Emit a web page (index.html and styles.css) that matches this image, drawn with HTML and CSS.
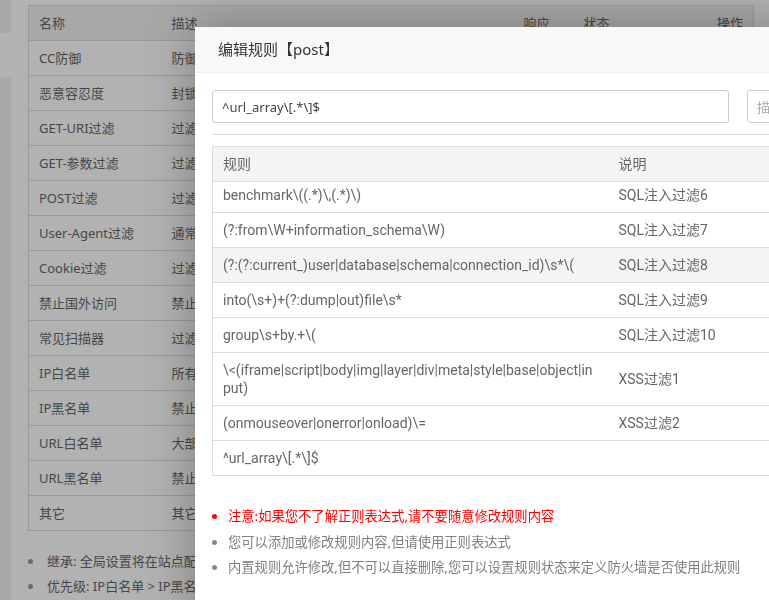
FILE: index.html
```html
<!DOCTYPE html>
<html lang="zh-CN">
<head>
  <meta charset="UTF-8" />
  <meta name="viewport" content="width=device-width, initial-scale=1.0" />
  <title>网站防火墙 - 编辑规则</title>
  <link rel="stylesheet" href="styles.css">
</head>
<body>
  <div class="page">
    <div class="side-nav">
      <div class="nav-item active"></div>
    </div>
    <div class="main">
      <table class="waf-table">
        <colgroup>
          <col class="c-name"><col class="c-desc"><col class="c-resp"><col class="c-state"><col class="c-op">
        </colgroup>
        <thead>
          <tr><th>名称</th><th>描述</th><th>响应</th><th>状态</th><th class="op">操作</th></tr>
        </thead>
        <tbody>
          <tr><td>CC防御</td><td>防御CC攻击，具体防御参数请到站点配置中调整</td><td></td><td></td><td></td></tr>
          <tr><td>恶意容忍度</td><td>封锁连续恶意请求，请到站点配置中调整容忍阈值</td><td></td><td></td><td></td></tr>
          <tr><td>GET-URI过滤</td><td>过滤URI中的恶意攻击</td><td></td><td></td><td></td></tr>
          <tr><td>GET-参数过滤</td><td>过滤GET参数中的恶意攻击</td><td></td><td></td><td></td></tr>
          <tr><td>POST过滤</td><td>过滤POST参数中的恶意攻击</td><td></td><td></td><td></td></tr>
          <tr><td>User-Agent过滤</td><td>通常用于过滤浏览器、蜘蛛及一些自动扫描器</td><td></td><td></td><td></td></tr>
          <tr><td>Cookie过滤</td><td>过滤利用Cookie发起的渗透攻击</td><td></td><td></td><td></td></tr>
          <tr><td>禁止国外访问</td><td>禁止中国大陆以外的地区访问站点</td><td></td><td></td><td></td></tr>
          <tr><td>常见扫描器</td><td>过滤常见扫描测试工具的渗透测试</td><td></td><td></td><td></td></tr>
          <tr><td>IP白名单</td><td>所有规则对IP白名单无效</td><td></td><td></td><td></td></tr>
          <tr><td>IP黑名单</td><td>禁止访问的IP</td><td></td><td></td><td></td></tr>
          <tr><td>URL白名单</td><td>大部分规则对URL白名单无效</td><td></td><td></td><td></td></tr>
          <tr><td>URL黑名单</td><td>禁止访问的URL地址</td><td></td><td></td><td></td></tr>
          <tr><td>其它</td><td>其它规则</td><td></td><td></td><td></td></tr>
        </tbody>
      </table>

      <ul class="tips">
        <li>继承: 全局设置将在站点配置中自动继承为默认值</li>
        <li>优先级: IP白名单 &gt; IP黑名单 &gt; URL白名单 &gt; URL黑名单 &gt; CC防御</li>
      </ul>
    </div>
  </div>

  <div class="shade"></div>

  <div class="layer">
    <div class="layer-title">编辑规则【post】</div>
    <div class="layer-content">
      <div class="rule-form">
        <input class="bt-input rule-input" type="text" value="^url_array\[.*\]$" />
        <input class="bt-input desc-input" type="text" placeholder="描述" />
      </div>
      <div class="divider"></div>

      <div class="rule-table">
        <table class="rules">
          <colgroup><col class="c-rule"><col class="c-note"></colgroup>
          <thead>
            <tr><th>规则</th><th>说明</th></tr>
          </thead>
        </table>
        <div class="rule-scroll">
          <table class="rules rules-body">
            <colgroup><col class="c-rule"><col class="c-note"></colgroup>
            <tbody>
              <tr><td>benchmark\((.*)\,(.*)\)</td><td>SQL注入过滤6</td></tr>
              <tr><td>(?:from\W+information_schema\W)</td><td>SQL注入过滤7</td></tr>
              <tr class="hover"><td>(?:(?:current_)user|database|schema|connection_id)\s*\(</td><td>SQL注入过滤8</td></tr>
              <tr><td>into(\s+)+(?:dump|out)file\s*</td><td>SQL注入过滤9</td></tr>
              <tr><td>group\s+by.+\(</td><td>SQL注入过滤10</td></tr>
              <tr><td>\&lt;(iframe|script|body|img|layer|div|meta|style|base|object|input)</td><td>XSS过滤1</td></tr>
              <tr><td>(onmouseover|onerror|onload)\=</td><td>XSS过滤2</td></tr>
              <tr><td>^url_array\[.*\]$</td><td></td></tr>
            </tbody>
          </table>
        </div>
      </div>

      <ul class="help">
        <li class="warn">注意:如果您不了解正则表达式,请不要随意修改规则内容</li>
        <li>您可以添加或修改规则内容,但请使用正则表达式</li>
        <li>内置规则允许修改,但不可以直接删除,您可以设置规则状态来定义防火墙是否使用此规则</li>
      </ul>
    </div>
  </div>
</body>
</html>
```

FILE: styles.css
```css
* {
  box-sizing: border-box;
}
html, body {
  margin: 0;
  height: 100%;
  overflow: hidden;
}
body {
  font-family: "Noto Sans", "Noto Sans CJK SC", sans-serif;
  font-size: 13px;
  color: #666;
  background: #fff;
}

/* page underneath the dialog */
.page {
  display: flex;
  height: 100%;
}
.side-nav {
  width: 11px;
  background: #f1f1f1;
  padding-top: 33px;
}
.nav-item.active {
  height: 44px;
  background: #fff;
}
.main {
  flex: 1;
  padding: 5px 0 0 17px;
}
.waf-table {
  width: 725px;
  table-layout: fixed;
  border-collapse: collapse;
  border: 1px solid #ddd;
}
.waf-table .c-name { width: 133px; }
.waf-table .c-desc { width: 352px; }
.waf-table .c-resp { width: 60px; }
.waf-table .c-state { width: 60px; }
.waf-table .c-op { width: 120px; }
.waf-table th,
.waf-table td {
  padding: 8px 10px;
  line-height: 18px;
  border-bottom: 1px solid #ddd;
  text-align: left;
  font-weight: normal;
  white-space: nowrap;
  overflow: hidden;
}
.waf-table th {
  background: #f1f1f1;
}
.waf-table th.op {
  text-align: right;
}
.tips {
  list-style: none;
  margin: 18px 0 0;
  padding: 0;
}
.tips li {
  display: flex;
  align-items: center;
  line-height: 25px;
  white-space: nowrap;
}
.tips li::before {
  content: "";
  width: 5px;
  height: 5px;
  border-radius: 50%;
  background: #999;
  margin: 0 14px 0 0;
  flex: none;
}

.shade {
  position: fixed;
  inset: 0;
  background: rgba(0, 0, 0, 0.3);
}

/* edit dialog */
.layer {
  position: absolute;
  left: 195px;
  top: 27px;
  width: 760px;
  height: 600px;
  background: #fff;
  box-shadow: 1px 1px 50px rgba(0, 0, 0, 0.3);
}
.layer-title {
  height: 46px;
  line-height: 45px;
  padding-left: 23px;
  font-size: 15px;
  color: #333;
  background: #f8f8f8;
  border-bottom: 1px solid #eee;
}
.layer-content {
  padding: 17px 0 0 17px;
}
.rule-form {
  display: flex;
  gap: 18px;
}
.bt-input {
  flex: none;
  height: 33px;
  padding: 0 9px;
  border: 1px solid #ccc;
  border-radius: 3px;
  font-family: inherit;
  font-size: 13px;
  color: #444;
  outline: none;
}
.bt-input::placeholder {
  color: #aaa;
}
.rule-input { width: 517px; }
.desc-input { width: 180px; }
.divider {
  margin: 11px 0;
  border-top: 1px solid #ddd;
}

.rules {
  width: 700px;
  table-layout: fixed;
  border-collapse: collapse;
  border-left: 1px solid #ddd;
  font-family: Roboto, "Noto Sans CJK SC", sans-serif;
  font-size: 14px;
}
.rules .c-rule { width: 396px; }
.rules th,
.rules td {
  padding: 8px 10px;
  line-height: 18px;
  text-align: left;
  font-weight: normal;
  border-bottom: 1px solid #ddd;
  word-break: break-all;
}
.rules th {
  background: #f4f4f4;
  border-top: 1px solid #ddd;
}
.rules tr.hover td {
  background: #f4f4f4;
}
.rule-scroll {
  overflow: hidden;
}
.rules-body {
  margin-top: -4px;
}

.help {
  list-style: none;
  margin: 28px 0 0;
  padding: 0;
  font-size: 13.3px;
  color: #808080;
}
.help li {
  display: flex;
  align-items: center;
  line-height: 25.5px;
  white-space: nowrap;
}
.help li::before {
  content: "";
  width: 5px;
  height: 5px;
  border-radius: 50%;
  background: #888;
  margin-right: 11px;
  flex: none;
}
.help li.warn {
  color: #f00;
}
.help li.warn::before {
  background: #f00;
}
```
